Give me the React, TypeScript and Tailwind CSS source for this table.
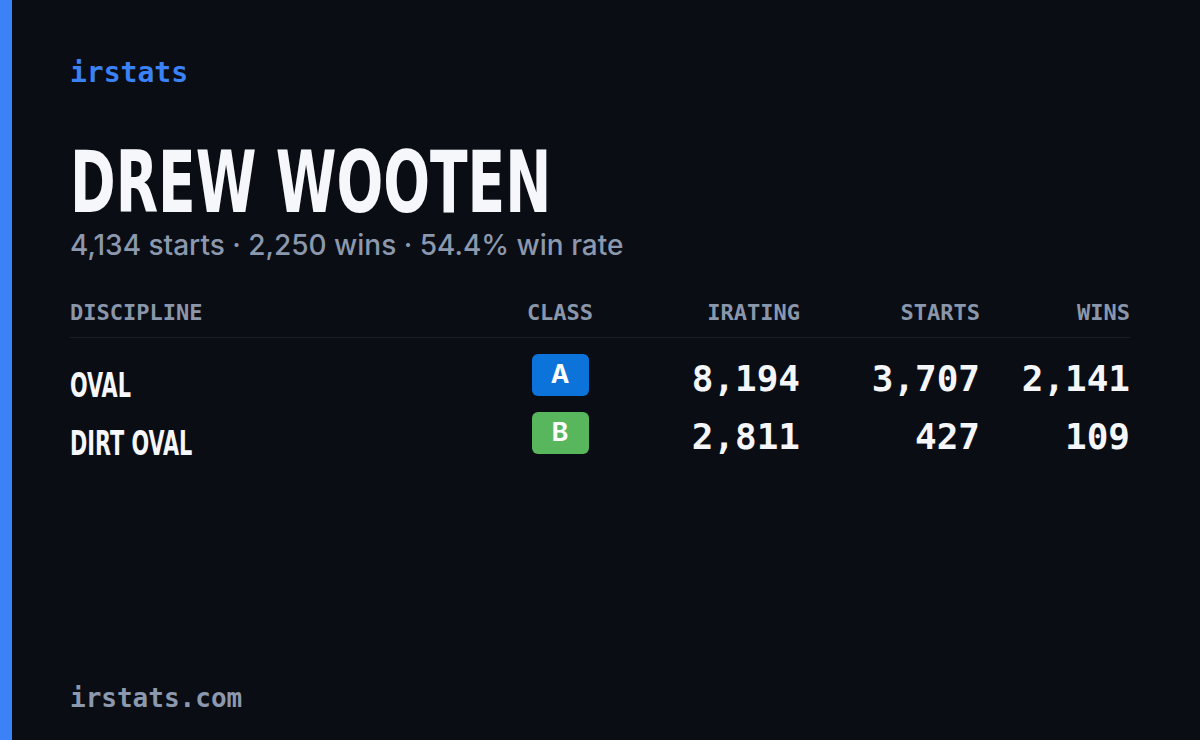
type Row = {
  discipline: string;
  license: 'A' | 'B';
  irating: string;
  starts: string;
  wins: string;
};

const rows: Row[] = [
  { discipline: 'OVAL', license: 'A', irating: '8,194', starts: '3,707', wins: '2,141' },
  { discipline: 'DIRT OVAL', license: 'B', irating: '2,811', starts: '427', wins: '109' },
];

const mono = "font-['DejaVu_Sans_Mono',monospace]";
const condensed = "font-['DejaVu_Sans_Condensed','DejaVu_Sans',sans-serif]";
const cols = 'grid grid-cols-[1fr_120px_180px_180px_150px]';

function LicenseBadge({ license }: { license: Row['license'] }) {
  const color = license === 'A' ? 'bg-[#0b73d9]' : 'bg-[#58b65c]';
  return (
    <span
      className={`inline-flex h-[42px] w-[57px] items-center justify-center rounded-[6px] ${color} font-['Inter',sans-serif] text-[25px] font-bold text-white`}
    >
      {license}
    </span>
  );
}

export default function App() {
  return (
    <div className="flex h-[740px] w-[1200px] overflow-hidden bg-[#0a0d14]">
      <div className="w-[12px] shrink-0 bg-[#3b82f6]" />
      <main className="flex flex-1 flex-col pl-[58px] pr-[70px] pt-[56px] pb-[26px]">
        <div className={`${mono} text-[28px] font-bold leading-[34px] text-[#3b82f6]`}>irstats</div>

        <h1
          className={`${condensed} mt-[48px] origin-left scale-x-[0.72] whitespace-nowrap text-[85px] font-bold leading-[90px] text-[#f5f7fb]`}
        >
          DREW WOOTEN
        </h1>
        <p className="font-['Inter',sans-serif] text-[28px] font-medium leading-[34px] text-[#8b98ad]">
          4,134 starts · 2,250 wins · 54.4% win rate
        </p>

        <div className="mt-[38px]">
          <div
            className={`${mono} ${cols} border-b border-[#1b1f2a] pb-[11px] text-[22px] font-bold leading-[26px] text-[#8a97ab]`}
          >
            <span>DISCIPLINE</span>
            <span className="text-center">CLASS</span>
            <span className="text-right">IRATING</span>
            <span className="text-right">STARTS</span>
            <span className="text-right">WINS</span>
          </div>

          <div className="mt-[16px] flex flex-col">
            {rows.map((row) => (
              <div key={row.discipline} className={`${cols} h-[58px] items-start`}>
                <span
                  className={`${condensed} origin-left scale-x-[0.68] whitespace-nowrap pt-[10px] text-[34px] font-bold leading-[42px] text-[#f5f7fb]`}
                >
                  {row.discipline}
                </span>
                <span className="flex justify-center">
                  <LicenseBadge license={row.license} />
                </span>
                <span className={`${mono} pt-[4px] text-right text-[36px] font-bold leading-[42px] text-[#f4f6fa]`}>
                  {row.irating}
                </span>
                <span className={`${mono} pt-[4px] text-right text-[36px] font-bold leading-[42px] text-[#f4f6fa]`}>
                  {row.starts}
                </span>
                <span className={`${mono} pt-[4px] text-right text-[36px] font-bold leading-[42px] text-[#f4f6fa]`}>
                  {row.wins}
                </span>
              </div>
            ))}
          </div>
        </div>

        <div className={`${mono} mt-auto text-[26px] font-bold leading-[32px] text-[#8b98ad]`}>irstats.com</div>
      </main>
    </div>
  );
}
